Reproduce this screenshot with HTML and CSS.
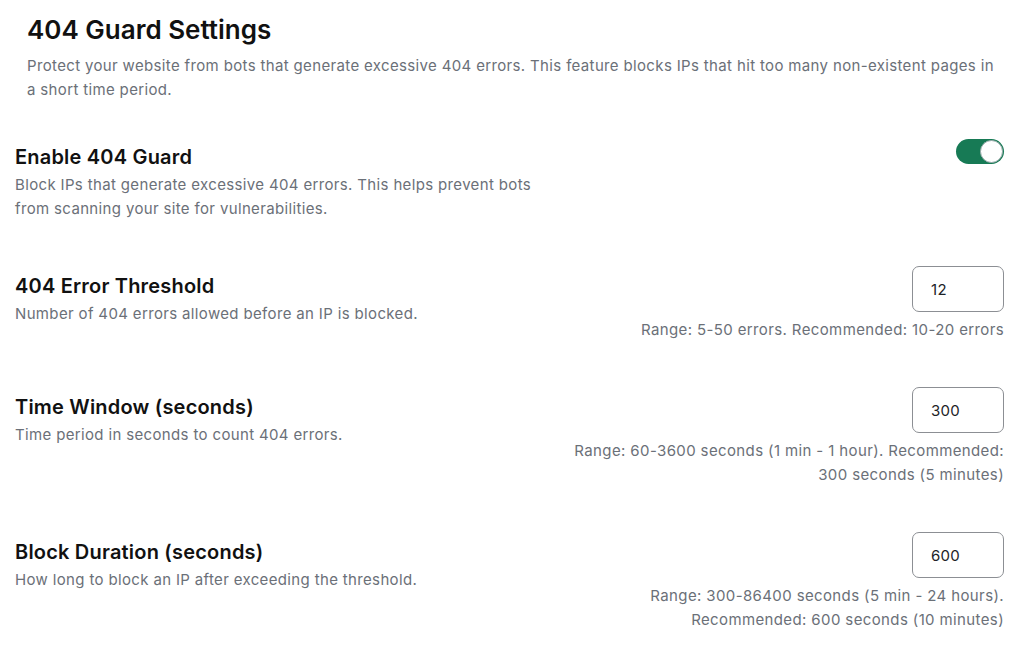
FILE: index.html
```html
<!DOCTYPE html>
<html lang="en">
<head>
    <meta charset="UTF-8">
    <meta name="viewport" content="width=device-width, initial-scale=1.0">
    <title>404 Guard Settings</title>
    <link rel="stylesheet" href="styles.css">
</head>
<body>
    <div class="settings">
        <div class="header">
            <h1>404 Guard Settings</h1>
            <p>Protect your website from bots that generate excessive 404 errors. This feature blocks IPs that hit too many non-existent pages in a short time period.</p>
        </div>

        <!-- Enable toggle -->
        <div class="row row-toggle">
            <div class="info">
                <h3>Enable 404 Guard</h3>
                <p>Block IPs that generate excessive 404 errors. This helps prevent bots from scanning your site for vulnerabilities.</p>
            </div>
            <label class="switch">
                <input type="checkbox" checked>
                <span class="slider"></span>
            </label>
        </div>

        <div class="row">
            <div class="info">
                <h3>404 Error Threshold</h3>
                <p>Number of 404 errors allowed before an IP is blocked.</p>
            </div>
            <div class="control">
                <input type="text" value="12">
                <p class="help">Range: 5-50 errors. Recommended: 10-20 errors</p>
            </div>
        </div>

        <div class="row">
            <div class="info">
                <h3>Time Window (seconds)</h3>
                <p>Time period in seconds to count 404 errors.</p>
            </div>
            <div class="control">
                <input type="text" value="300">
                <p class="help">Range: 60-3600 seconds (1 min - 1 hour). Recommended: 300 seconds (5 minutes)</p>
            </div>
        </div>

        <div class="row">
            <div class="info">
                <h3>Block Duration (seconds)</h3>
                <p>How long to block an IP after exceeding the threshold.</p>
            </div>
            <div class="control">
                <input type="text" value="600">
                <p class="help">Range: 300-86400 seconds (5 min - 24 hours). Recommended: 600 seconds (10 minutes)</p>
            </div>
        </div>
    </div>
</body>
</html>
```

FILE: styles.css
```css
* {
    box-sizing: border-box;
}

body {
    margin: 0;
    background-color: #fff;
    font-family: Inter, "Noto Sans", sans-serif;
    color: #1d2327;
}

.settings {
    padding: 13px 20px 0 15px;
}

.header {
    padding: 0 0 0 12px;
    margin-bottom: 35px;
}

.header h1 {
    margin: 0 0 8px;
    padding-top: 1px;
    font-size: 26px;
    line-height: 32px;
    font-weight: 600;
    color: #111;
}

.header p {
    margin: 0;
    font-size: 15px;
    line-height: 24px;
    letter-spacing: 0.35px;
    color: #6b7078;
}

.row {
    display: flex;
    justify-content: space-between;
    align-items: flex-start;
    margin-bottom: 45px;
}

.info {
    padding-top: 6px;
    max-width: 540px;
}

.info h3 {
    margin: 0 0 2px;
    font-size: 20px;
    line-height: 28px;
    font-weight: 600;
    letter-spacing: 0.2px;
    color: #111;
}

.info p {
    margin: 0;
    font-size: 15px;
    line-height: 24px;
    letter-spacing: 0.35px;
    color: #6b7078;
}

.control {
    display: flex;
    flex-direction: column;
    align-items: flex-end;
    max-width: 445px;
}

.control input[type="text"] {
    width: 92px;
    height: 46px;
    padding: 0 18px;
    border: 1px solid #8c8f94;
    border-radius: 7px;
    font-family: inherit;
    font-size: 15px;
    letter-spacing: 0.3px;
    color: #1d2327;
    background: #fff;
}

.help {
    margin: 6px 0 0;
    font-size: 15px;
    line-height: 24px;
    letter-spacing: 0.38px;
    color: #6b7078;
    text-align: right;
}

/* toggle switch */
.switch {
    position: relative;
    display: inline-block;
    width: 48px;
    height: 25px;
    margin-top: 2px;
}

.switch input {
    opacity: 0;
    width: 0;
    height: 0;
}

.slider {
    position: absolute;
    inset: 0;
    background-color: #177a55;
    border-radius: 13px;
    cursor: pointer;
}

.slider::before {
    content: "";
    position: absolute;
    top: 1px;
    right: 1px;
    width: 23px;
    height: 23px;
    border-radius: 50%;
    background: #fff;
    border: 1px solid #9aa;
    box-sizing: border-box;
}
```
